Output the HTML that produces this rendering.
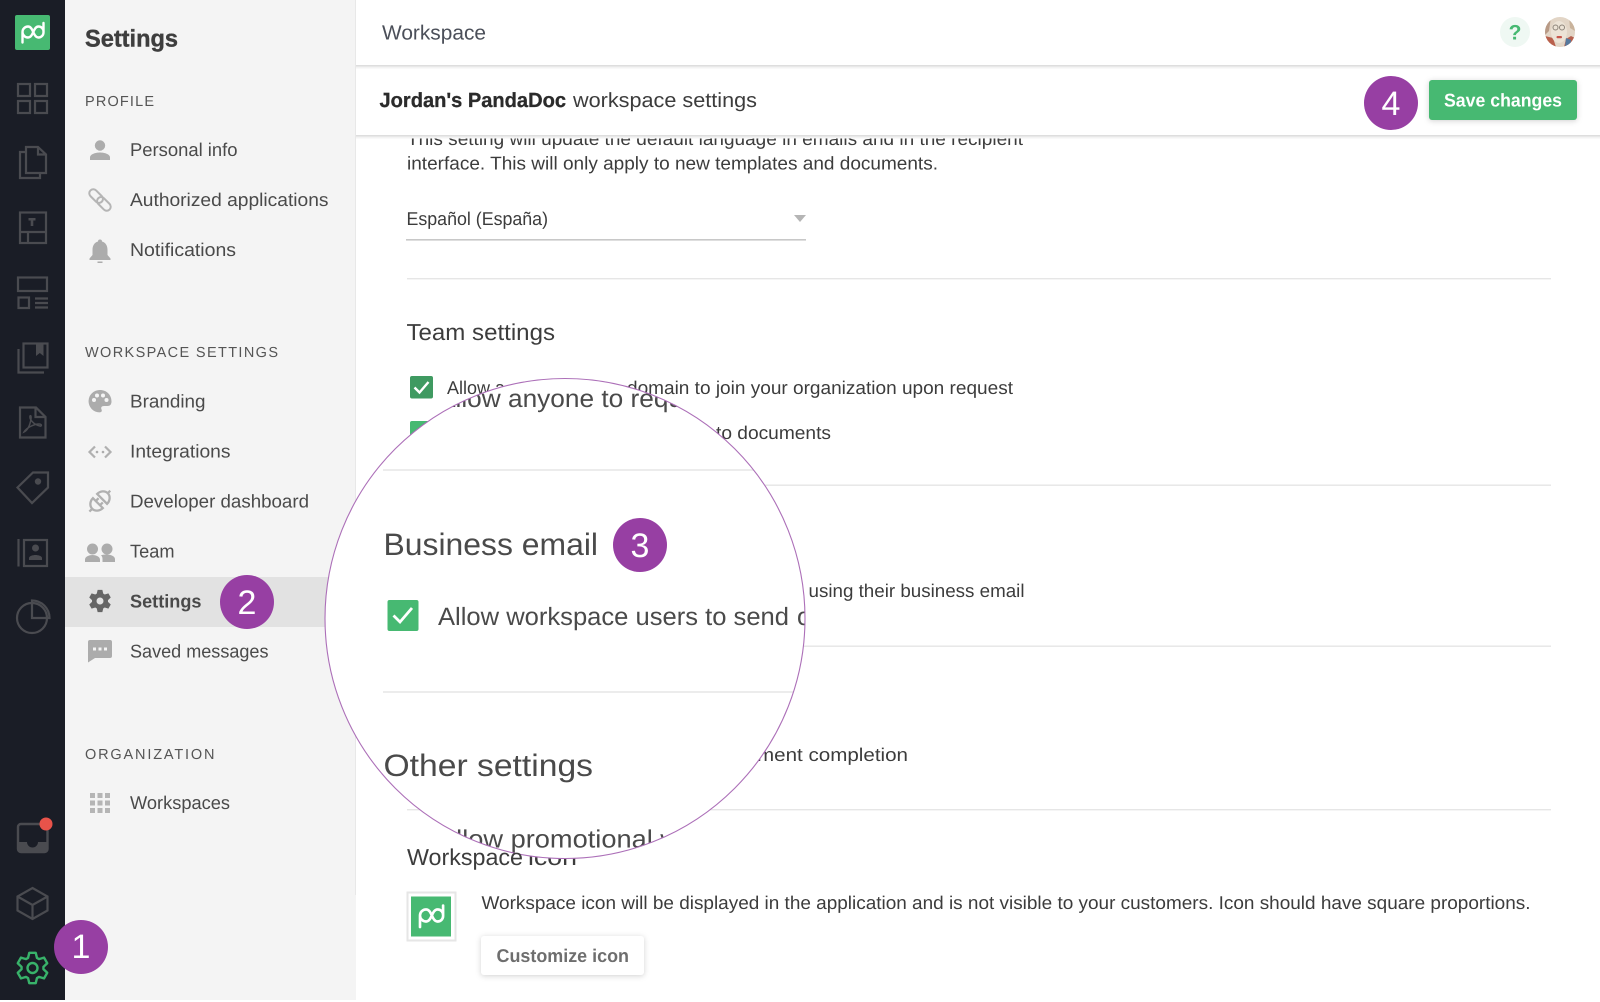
<!DOCTYPE html>
<html lang="en">
<head>
<meta charset="utf-8">
<title>Workspace settings</title>
<style>
html,body{margin:0;padding:0;background:#fff;width:1600px;height:1002px;overflow:hidden}
svg{display:block;filter:blur(.35px)}
text{font-family:"Liberation Sans",sans-serif;text-rendering:geometricPrecision}
.n{font-size:18.5px;fill:#4a4a4a}
.h{font-size:14.5px;fill:#555}
.m{font-size:18.5px;fill:#3c3c3c}
.t{font-size:23px;fill:#3c3c3c}
.z{font-size:25px;fill:#4a4a4a}
.zt{font-size:31px;fill:#4a4a4a}
.b{font-weight:bold}
.r{fill:none;stroke:#4a4b50;stroke-width:2.2}
.rf{fill:#4a4b50}
.i{fill:#acacac}
.is{fill:none;stroke:#b5b5b5;stroke-width:2}
.num{font-size:34px;fill:#fff;text-anchor:middle}
.sh{filter:drop-shadow(0 1px 3px rgba(0,0,0,.18))}
</style>
</head>
<body>
<svg width="1600" height="1002" viewBox="0 0 1600 1002" xmlns="http://www.w3.org/2000/svg">
<defs>
<clipPath id="mag"><circle cx="565" cy="618.5" r="240"/></clipPath>
<clipPath id="ava"><circle cx="1560" cy="32" r="15"/></clipPath>
<path id="gear" d="M-4.47-10.05L-3.22-15.16L3.22-15.16L4.47-10.05L6.47-8.9L11.52-10.37L14.74-4.79L10.94-1.15L10.94 1.15L14.74 4.79L11.52 10.37L6.47 8.9L4.47 10.05L3.22 15.16L-3.22 15.16L-4.47 10.05L-6.47 8.9L-11.52 10.37L-14.74 4.79L-10.94 1.15L-10.94-1.15L-14.74-4.79L-11.52-10.37L-6.47-8.9Z"/>
<path id="pd" d="M-10 10V-.5a5.5 5.5 0 0 1 5.5-5.5c5.500 0 5 11 10.500 11a5 5 0 0 0 5-5V-9.500M-10-.5a5.500 5.500 0 0 0 5.500 5.500c5.500 0 5-11 10.500-11a5 5 0 0 1 5 5.500" fill="none" stroke="#fff" stroke-width="2.400" stroke-linecap="round"/>
</defs>

<rect width="1600" height="1002" fill="#fff"/>

<!-- main content -->
<text class="m" x="407" y="145" textLength="616" lengthAdjust="spacingAndGlyphs">This setting will update the default language in emails and in the recipient</text>
<text class="m" x="407" y="169.500" textLength="531" lengthAdjust="spacingAndGlyphs">interface. This will only apply to new templates and documents.</text>
<text class="m" x="406.500" y="225" textLength="141.500" lengthAdjust="spacingAndGlyphs">Español (España)</text>
<rect x="406" y="239" width="400" height="1.600" fill="#c8c8c8"/>
<path d="M794 215h12l-6 7z" fill="#b5b5b5"/>
<rect x="407" y="278" width="1144" height="1.400" fill="#e6e6e6"/>

<text class="t" x="406.500" y="340" textLength="148.500" lengthAdjust="spacingAndGlyphs">Team settings</text>
<rect x="410" y="376" width="23" height="22.500" rx="2" fill="#3f9a61"/>
<path d="M414.500 387.500l5 5 9-10.500" fill="none" stroke="#fff" stroke-width="2.400"/>
<text class="m" x="447" y="394" textLength="58" lengthAdjust="spacingAndGlyphs">Allow a</text>
<text class="m" x="627" y="394" textLength="386" lengthAdjust="spacingAndGlyphs">domain to join your organization upon request</text>
<rect x="410" y="421" width="23" height="22.500" rx="2" fill="#47b972"/>
<text class="m" x="716" y="439" textLength="115" lengthAdjust="spacingAndGlyphs">to documents</text>
<rect x="407" y="484.500" width="1144" height="1.400" fill="#e6e6e6"/>
<text class="m" x="808.500" y="597" textLength="216" lengthAdjust="spacingAndGlyphs">using their business email</text>
<rect x="407" y="645.500" width="1144" height="1.400" fill="#e6e6e6"/>
<text class="m" x="757" y="761" textLength="151" lengthAdjust="spacingAndGlyphs">ment completion</text>
<rect x="407" y="809" width="1144" height="1.400" fill="#e6e6e6"/>

<text class="t" x="528" y="865" textLength="49" lengthAdjust="spacingAndGlyphs">icon</text>
<rect x="407.500" y="892.500" width="48" height="48" fill="#fff" stroke="#e6e6e6" stroke-width="2"/>
<rect x="411" y="896.500" width="40" height="40" fill="#47b972"/>
<use href="#pd" transform="translate(431,916) scale(1.100)"/>
<text class="m" x="481.500" y="909" textLength="1049" lengthAdjust="spacingAndGlyphs">Workspace icon will be displayed in the application and is not visible to your customers. Icon should have square proportions.</text>
<rect class="sh" x="481" y="936" width="163" height="39" rx="3" fill="#fff"/>
<text class="m b" x="496.500" y="962" textLength="132.500" lengthAdjust="spacingAndGlyphs" style="fill:#6e6e6e">Customize icon</text>

<!-- sub header -->
<rect x="356" y="65" width="1244" height="70" fill="#fff"/>
<rect x="356" y="135" width="1244" height="1.500" fill="#dedede"/>
<rect x="356" y="136.500" width="1244" height="2" fill="#f3f3f3"/>
<text x="379.500" y="107" textLength="186.500" lengthAdjust="spacingAndGlyphs" font-size="20.500" font-weight="bold" fill="#2b2b2b" stroke="#2b2b2b" stroke-width=".3">Jordan's PandaDoc</text>
<text x="573" y="107" textLength="184" lengthAdjust="spacingAndGlyphs" font-size="20.500" fill="#3c3c3c">workspace settings</text>
<rect class="sh" x="1429" y="80" width="148" height="40" rx="3" fill="#47b972"/>
<text class="m b" x="1444" y="106.500" textLength="118" lengthAdjust="spacingAndGlyphs" style="fill:#fff">Save changes</text>

<!-- top header -->
<rect x="356" y="0" width="1244" height="65" fill="#fff"/>
<rect x="356" y="65" width="1244" height="1.500" fill="#dedede"/>
<rect x="356" y="66.500" width="1244" height="2" fill="#f3f3f3"/>
<text x="382" y="39.500" textLength="104" lengthAdjust="spacingAndGlyphs" font-size="20.500" fill="#4b4f59">Workspace</text>
<circle cx="1515" cy="32" r="15" fill="#eff8f3"/>
<text x="1515" y="39.500" font-size="21" font-weight="bold" fill="#47b972" text-anchor="middle">?</text>
<g clip-path="url(#ava)">
<rect x="1545" y="17" width="30" height="30" fill="#e2d5c6"/>
<path d="M1545 17h6l-2 14-4 4z" fill="#b89a86"/>
<path d="M1569 17h6v14l-5-3z" fill="#c9b39c"/>
<path d="M1545 36l8 2 3 9h-11z" fill="#b9604c"/>
<path d="M1564 47l2-8 5-3 4 2v9z" fill="#b6604e"/>
<path d="M1566 38l5 2-1 7h-5z" fill="#55799e"/>
<ellipse cx="1559" cy="32" rx="8" ry="11" fill="#ece3d6"/>
<circle cx="1555.500" cy="27.500" r="2.500" fill="none" stroke="#8d8479"/>
<circle cx="1562" cy="27.500" r="2.500" fill="none" stroke="#8d8479"/>
<rect x="1556.500" y="36" width="5.500" height="2.300" rx="1" fill="#c8564c"/>
</g>

<!-- sidebar -->
<rect x="65" y="0" width="291" height="1000" fill="#f4f4f4"/>
<rect x="355" y="0" width="1" height="895" fill="#e8e8e8"/>
<rect x="65" y="577" width="291" height="50" fill="#e2e2e2"/>

<text x="85" y="46.500" textLength="93" lengthAdjust="spacingAndGlyphs" font-size="24" font-weight="bold" fill="#3e3e3e" stroke="#3e3e3e" stroke-width=".4">Settings</text>
<text class="h" x="85" y="106" textLength="69">PROFILE</text>
<text class="n" x="130" y="156" textLength="107.500" lengthAdjust="spacingAndGlyphs">Personal info</text>
<text class="n" x="130" y="206" textLength="198.500" lengthAdjust="spacingAndGlyphs">Authorized applications</text>
<text class="n" x="130" y="256" textLength="106" lengthAdjust="spacingAndGlyphs">Notifications</text>
<text class="h" x="85" y="357" textLength="193">WORKSPACE SETTINGS</text>
<text class="n" x="130" y="407.300" textLength="75.500" lengthAdjust="spacingAndGlyphs">Branding</text>
<text class="n" x="130" y="457.300" textLength="100.500" lengthAdjust="spacingAndGlyphs">Integrations</text>
<text class="n" x="130" y="507.300" textLength="179" lengthAdjust="spacingAndGlyphs">Developer dashboard</text>
<text class="n" x="130" y="557.300" textLength="44.500" lengthAdjust="spacingAndGlyphs">Team</text>
<text class="n b" x="130" y="607.300" textLength="71.500" lengthAdjust="spacingAndGlyphs">Settings</text>
<text class="n" x="130" y="657.300" textLength="138.500" lengthAdjust="spacingAndGlyphs">Saved messages</text>
<text class="h" x="85" y="759" textLength="129.500">ORGANIZATION</text>
<text class="n" x="130" y="809" textLength="100" lengthAdjust="spacingAndGlyphs">Workspaces</text>

<!-- sidebar icons -->
<circle class="i" cx="100" cy="145.500" r="5.200"/>
<path class="i" d="M90 160v-2.500c0-3.500 6-5 10-5s10 1.500 10 5v2.500z"/>
<g class="is" transform="translate(100,200) rotate(45)"><rect x="-13.500" y="-4" width="16" height="8" rx="4"/><rect x="-2.500" y="-4" width="16" height="8" rx="4"/></g>
<path class="i" d="M98 241.500a2 2 0 0 1 4 0c4 1.200 5.500 4.500 5.500 8.500v5l3 3.500v1.500h-21v-1.500l3-3.500v-5c0-4 1.500-7.300 5.500-8.500zM97.500 261.500h5v1.500h-5z"/>
<path class="i" d="M100 390a11.200 11.200 0 0 0-.5 22.400c2 0 2.800-1.400 2-3-.8-1.800 0-3.400 2.500-3.400h3.500c2.500 0 4-1.600 4-4.500 0-6.800-5-11.500-11.500-11.500z"/>
<g fill="#f4f4f4"><circle cx="94" cy="400" r="2"/><circle cx="97" cy="395.500" r="2"/><circle cx="103" cy="395.500" r="2"/><circle cx="106.500" cy="400" r="2"/></g>
<path d="M95 446.500l-5.500 5.500 5.500 5.500M105 446.500l5.500 5.500-5.500 5.500" fill="none" stroke="#b0b0b0" stroke-width="2.200"/>
<circle class="i" cx="97" cy="452" r="1.300"/><circle class="i" cx="103" cy="452" r="1.300"/>
<g transform="translate(100,501) rotate(45)" fill="none" stroke="#b0b0b0" stroke-width="2.300">
<path d="M-7-3H7A7 8 0 0 0-7-3ZM0-11v-3.500"/>
<path d="M-7 3H7A7 8 0 0 1-7 3ZM0 11v4M-3 3v-4M3 3v-4"/>
</g>
<circle class="i" cx="92.500" cy="549" r="5.500"/><circle class="i" cx="107" cy="549" r="5.500"/>
<path class="i" d="M85 562v-2.500c0-3 4.500-4.500 7.500-4.500s7.500 1.500 7.500 4.500v2.500zM102.500 562v-3c0-1.500-.5-2.700-1.500-3.700 1.800-.7 4.500-.8 6-.8 3 0 8 1.500 8 4.500v3z"/>
<use href="#gear" fill="#666" transform="translate(100,601) scale(.73)"/>
<circle cx="100" cy="601" r="3.500" fill="#e2e2e2"/>
<path class="i" d="M90 640h20a2 2 0 0 1 2 2v14a2 2 0 0 1-2 2H95l-7 4.500V642a2 2 0 0 1 2-2z"/>
<g fill="#f4f4f4"><rect x="93" y="647.500" width="3" height="3"/><rect x="98.500" y="647.500" width="3" height="3"/><rect x="104" y="647.500" width="3" height="3"/></g>
<g fill="#b5b5b5">
<rect x="90" y="793" width="5" height="5"/><rect x="97.500" y="793" width="5" height="5"/><rect x="105" y="793" width="5" height="5"/>
<rect x="90" y="800.500" width="5" height="5"/><rect x="97.500" y="800.500" width="5" height="5"/><rect x="105" y="800.500" width="5" height="5"/>
<rect x="90" y="808" width="5" height="5"/><rect x="97.500" y="808" width="5" height="5"/><rect x="105" y="808" width="5" height="5"/>
</g>

<!-- rail -->
<rect x="0" y="0" width="65" height="1000" fill="#1a1d26"/>
<rect x="15" y="15" width="35" height="35" rx="2" fill="#47b972"/>
<use href="#pd" transform="translate(32.500,32.500)"/>

<g class="r">
<rect x="18" y="84" width="12" height="12"/><rect x="35" y="84" width="12" height="12"/>
<rect x="18" y="101" width="12" height="12"/><rect x="35" y="101" width="12" height="12"/>
<path d="M26 147h12l8 7.500V173H26zM38 147v7.500h8"/>
<path d="M26 152H20v26h20v-5"/>
<rect x="20" y="212.500" width="26" height="30.500"/><path d="M20 232h26M28 232v11"/>
<rect x="18" y="277.500" width="29" height="13.500"/><rect x="18.500" y="297.500" width="10.500" height="10.500"/>
<path d="M35 298.500h13M35 303h13M35 307.500h13"/>
<rect x="23.500" y="343.500" width="24" height="24"/><path d="M18.500 349v23.500H44"/>
<path d="M20 407.500h16l9.500 9.500v20.500H20z"/><path d="M35.500 407.500v9.500h10"/>
<path d="M24 432c4-2 6-7 7-13 .5-3-.5-4-1-3-1 3 4 9 10 10 2 .5 2-2-1-2-5 0-13 4-15 8z" stroke-width="1.500"/>
<path d="M17.500 487.500L33 472.500H48V487.500L32 503Z"/>
<path d="M18.500 539v27.500"/><rect x="24" y="540" width="23" height="26"/>
<circle cx="32" cy="618" r="15"/><path d="M32 600.500a17.500 17.500 0 0 1 17.500 17.500H32z"/>
<path d="M32.500 888l15 8.500v14l-15 8.500-15-8.500v-14zM17.500 896.500l15 8.500 15-8.500M32.500 905v14"/>
</g>
<path class="rf" d="M28.500 218h7v2.500h-2.200v5.500h-2.600v-5.500h-2.200z"/>
<path class="rf" d="M36 343h7.500v13l-3.700-3-3.800 3z"/>
<circle class="rf" cx="38" cy="481.500" r="3.200"/>
<circle class="rf" cx="35.500" cy="548" r="3.500"/>
<path class="rf" d="M29 560v-2c0-2 4-3 6.500-3s6.500 1 6.500 3v2z"/>

<rect x="18" y="824" width="29.500" height="28" rx="3" fill="none" stroke="#4a4b50" stroke-width="2.400"/>
<path class="rf" d="M18 842h9a5.500 5.500 0 0 0 11 0h9.500v8a3 3 0 0 1-3 3H21a3 3 0 0 1-3-3z"/>
<circle cx="46" cy="824" r="6.500" fill="#e8534a"/>

<use href="#gear" fill="none" stroke="#38b26a" stroke-width="2.400" stroke-linejoin="round" transform="translate(32.500,968)"/>
<circle cx="32.500" cy="968" r="5" fill="none" stroke="#38b26a" stroke-width="2.400"/>

<!-- magnifier -->
<circle cx="565" cy="618.500" r="240" fill="#fff"/>
<g clip-path="url(#mag)">
<text class="z" x="438" y="407" textLength="245" lengthAdjust="spacingAndGlyphs">Allow anyone to requ</text>
<rect x="383" y="469" width="440" height="2" fill="#ececec"/>
<text class="zt" x="383.500" y="555" textLength="214.500" lengthAdjust="spacingAndGlyphs">Business email</text>
<rect x="387.500" y="600" width="31" height="31" rx="2" fill="#47b972"/>
<path d="M393.500 615.500l6.500 6.500 12-14" fill="none" stroke="#fff" stroke-width="2.800"/>
<text class="z" x="438" y="625" textLength="351" lengthAdjust="spacingAndGlyphs">Allow workspace users to send</text>
<text class="z" x="797" y="625">o</text>
<rect x="383" y="691" width="440" height="2" fill="#ececec"/>
<text class="zt" x="383.500" y="776" textLength="209.500" lengthAdjust="spacingAndGlyphs">Other settings</text>
<text class="z" x="438" y="847.500" textLength="242" lengthAdjust="spacingAndGlyphs">Allow promotional w</text>
</g>
<circle cx="565" cy="618.500" r="240" fill="none" stroke="#ac6fb8" stroke-width="1.100"/>
<text class="t" x="407" y="865" textLength="116" lengthAdjust="spacingAndGlyphs">Workspace</text>

<!-- badges -->
<circle cx="81" cy="947" r="27" fill="#973fa3"/>
<text class="num" x="81" y="958">1</text>
<circle cx="247" cy="602" r="27" fill="#973fa3"/>
<text class="num" x="247" y="614">2</text>
<circle cx="640" cy="545" r="27" fill="#973fa3"/>
<text class="num" x="640" y="557">3</text>
<circle cx="1391" cy="103" r="27" fill="#973fa3"/>
<text class="num" x="1391" y="115">4</text>
</svg>
</body>
</html>
